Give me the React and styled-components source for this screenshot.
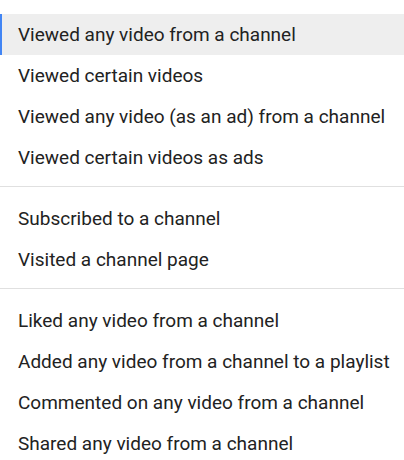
import React from 'react';
import styled, { createGlobalStyle } from 'styled-components';

const GlobalStyle = createGlobalStyle`
body {
    margin: 0;
    background: #ffffff;
    font-family: Roboto, "Noto Sans", sans-serif;
}
`;

const Menu = styled.div`
width: 404px;
height: 460px;
padding-top: 14px;
box-sizing: border-box;
overflow: hidden;
display: flex;
flex-direction: column;
`;

const Item = styled.div`
height: 41px;
flex-shrink: 0;
display: flex;
align-items: center;
box-sizing: border-box;
padding-left: ${props => props.active ? '16px' : '18px'};
border-left: ${props => props.active ? '2px solid #4285f4' : 'none'};
background: ${props => props.active ? '#eeeeee' : 'transparent'};
color: #222222;
font-size: 19px;
white-space: nowrap;
`;

const Divider = styled.div`
height: 1px;
flex-shrink: 0;
background: #e0e0e0;
margin: 8px 0 11px 0;
`;

const groups = [
    [
        'Viewed any video from a channel',
        'Viewed certain videos',
        'Viewed any video (as an ad) from a channel',
        'Viewed certain videos as ads',
    ],
    [
        'Subscribed to a channel',
        'Visited a channel page',
    ],
    [
        'Liked any video from a channel',
        'Added any video from a channel to a playlist',
        'Commented on any video from a channel',
        'Shared any video from a channel',
    ],
];

const App = () => {
    return (
        <>
            <GlobalStyle />
            <Menu>
                {groups.map((group, gi) => (
                    <React.Fragment key={gi}>
                        {gi > 0 && <Divider />}
                        {group.map((label, i) => (
                            <Item key={label} active={gi === 0 && i === 0}>{label}</Item>
                        ))}
                    </React.Fragment>
                ))}
            </Menu>
        </>
    );
};

export default App;
